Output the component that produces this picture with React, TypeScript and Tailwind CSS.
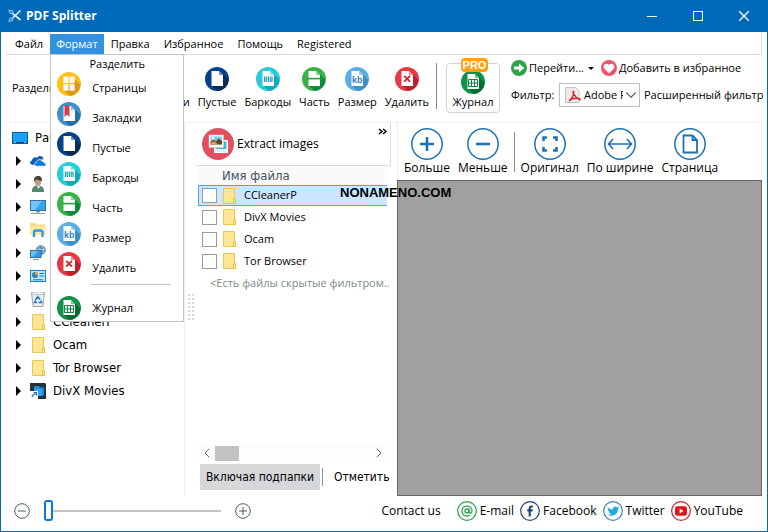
import React, { useState } from "react";
import { ChevronDown, ChevronLeft, ChevronRight } from "lucide-react";

type IconKind =
  | "pages"
  | "bookmarks"
  | "blank"
  | "barcodes"
  | "part"
  | "size"
  | "remove"
  | "log";

const palette: Record<IconKind, [string, string]> = {
  pages: ["#fcbf12", "#d99a10"],
  bookmarks: ["#3f8fc9", "#2470a8"],
  blank: ["#06418a", "#0b2c4e"],
  barcodes: ["#27ccd8", "#12a8b8"],
  part: ["#38b249", "#0c8a3e"],
  size: ["#5aaee4", "#3d8fc6"],
  remove: ["#e63946", "#bf1f2c"],
  log: ["#109347", "#056b32"],
};

const FormatIcon = ({ kind }: { kind: IconKind }) => {
  const [base, shade] = palette[kind];
  return (
    <svg viewBox="0 0 24 24" className="size-6 shrink-0" aria-hidden="true">
      <circle cx="12" cy="12" r="12" fill={base} />
      <path d="M18 7.5L23.4 12.9A12 12 0 0 1 13 23.95L6.5 18.2Z" fill={shade} />
      {kind === "pages" ? (
        <g fill="#fffaf0">
          <rect x="6.3" y="4.6" width="5.2" height="6.6" rx=".6" />
          <rect x="12.5" y="4.6" width="5.2" height="6.6" rx=".6" />
          <rect x="6.3" y="12.2" width="5.2" height="6.6" rx=".6" />
          <rect x="12.5" y="12.2" width="5.2" height="6.6" rx=".6" />
        </g>
      ) : (
        <>
          <path d="M6.5 4H14L18 8V19H6.5Z" fill="#fff" />
          <path d="M14 4V8H18Z" fill={base} opacity=".55" />
        </>
      )}
      {kind === "bookmarks" && (
        <path d="M7.5 3.5H12.5V15L10 12.5L7.5 15Z" fill="#e2364a" />
      )}
      {kind === "barcodes" && (
        <path
          d="M8.5 9.5V15M10.3 9.5V15M12.3 9.5V15M14.2 9.5V15M16 9.5V15"
          stroke="#15a3b4"
          strokeWidth="1.2"
        />
      )}
      {kind === "part" && <path d="M5 10.8H19.5V12.4H5Z" fill="#25a045" />}
      {kind === "size" && (
        <text
          x="12.3"
          y="16"
          textAnchor="middle"
          fontSize="9"
          fontWeight="700"
          fontFamily="Liberation Sans, sans-serif"
          fill="#2d7fb9"
        >
          kb
        </text>
      )}
      {kind === "remove" && (
        <path d="M9.2 8.8L15 14.6M15 8.8L9.2 14.6" stroke="#d5202f" strokeWidth="1.8" />
      )}
      {kind === "log" && (
        <path
          d="M7.5 9.5H16.5V16.5H7.5ZM7.5 13H16.5M10.5 9.5V16.5M13.5 9.5V16.5"
          fill="none"
          stroke="#0f8743"
          strokeWidth="1"
        />
      )}
    </svg>
  );
};

const Folder = () => (
  <svg viewBox="0 0 16 16" className="size-4 shrink-0" aria-hidden="true">
    <path d="M2.5.5H13.5V10.5L14.5 11V15.5H2.5Z" fill="#ffe694" stroke="#ecc64e" />
    <path d="M12.5 15.5V11L14.5 10.5V15.5Z" fill="#ffe694" stroke="#e5b93a" strokeWidth=".8" />
  </svg>
);

const Desktop = () => (
  <svg viewBox="0 0 16 16" className="size-4 shrink-0" aria-hidden="true">
    <rect x=".5" y="2.5" width="15" height="11" fill="#1ba1f5" stroke="#0c5c9c" />
    <path d="M1 12.5H15" stroke="#0a4680" />
    <path d="M2 12.5H4M12 12.5H14" stroke="#7cc8f8" />
  </svg>
);

const Cloud = () => (
  <svg viewBox="0 0 16 16" className="size-4 shrink-0" aria-hidden="true">
    <path
      d="M2.2 11.8C-.6 11.3-.4 7.8 2 7.5C2.2 4.8 5 3.4 7 4.8C9 1.8 13.2 3 13.5 6.2L8 7L5 12Z"
      fill="#0a5db8"
    />
    <path
      d="M6.4 13.2C3.8 13 3.8 9.6 6.4 9.3C6.8 6.2 11.2 5.6 12.2 8.5C14 8.2 14.4 9.4 14.3 9.9C16.6 10.2 16.4 13 14.4 13.2Z"
      fill="#0c7ad8"
      stroke="#fff"
      strokeWidth=".7"
    />
  </svg>
);

const Person = () => (
  <svg viewBox="0 0 16 16" className="size-4 shrink-0" aria-hidden="true">
    <path d="M2 16C1.6 11.5 4 9.6 8 9.6S14.2 12 14 16Z" fill="#4f8a6c" />
    <path d="M6.5 9.5L8.5 13L10.4 9.5Z" fill="#eef3ef" />
    <ellipse cx="8" cy="5.4" rx="3.2" ry="4.3" fill="#c49a7c" />
    <path d="M4 6C3.5 1.5 5.8 0 8.2 0S12.4 2 11.8 5C9.5 5 7.5 4 6.5 3.3Z" fill="#4a3d35" />
  </svg>
);

const Monitor = () => (
  <svg viewBox="0 0 16 16" className="size-4 shrink-0" aria-hidden="true">
    <rect x=".5" y="1.5" width="15" height="10" fill="#36a4ee" stroke="#3a6f9c" />
    <path d="M1 2H12L5 11H1Z" fill="#73c6f9" />
    <path d="M6 12H10V13.5H6Z" fill="#7d96ab" />
    <path d="M1 14.5H15" stroke="#8ba0b3" />
  </svg>
);

const Libraries = () => (
  <svg viewBox="0 0 16 16" className="size-4 shrink-0" aria-hidden="true">
    <path d="M0 1H5L6.5 2.5H15.5V13H0Z" fill="#ffdc76" />
    <path d="M0 4.5H15.5V13H0Z" fill="#ffe7a0" />
    <path d="M4 15V10.5Q4 8.5 6 8.5H10.5Q12.5 8.5 12.5 10.5V15" fill="none" stroke="#2b9be6" strokeWidth="2.4" />
  </svg>
);

const Network = () => (
  <svg viewBox="0 0 16 16" className="size-4 shrink-0" aria-hidden="true">
    <circle cx="10.8" cy="5.2" r="5" fill="#5c8fb8" />
    <path d="M8 1.5Q12 4 9 9M12 1Q15 4 13.5 8.5M6.5 4.5H15" fill="none" stroke="#bcd7ea" strokeWidth=".8" />
    <rect x=".5" y="5.5" width="10.5" height="7" fill="#2d9bea" stroke="#386c98" />
    <path d="M1 6H8L3 12H1Z" fill="#6bc0f6" />
    <path d="M3 14.5H9" stroke="#8297a8" />
  </svg>
);

const ControlPanel = () => (
  <svg viewBox="0 0 16 16" className="size-4 shrink-0" aria-hidden="true">
    <rect x=".5" y="2.5" width="15" height="11" fill="#bfe5fb" stroke="#1583cc" />
    <circle cx="5" cy="7" r="3" fill="#2184cc" />
    <path d="M5 7V4A3 3 0 0 1 8 7Z" fill="#f6a21b" />
    <path d="M9.5 5.5H14M9.5 8H14M3 11.8H13" stroke="#1976b8" />
  </svg>
);

const Bin = () => (
  <svg viewBox="0 0 16 16" className="size-4 shrink-0" aria-hidden="true">
    <path d="M1.5 1.5H14.5L12.8 15.5H3.2Z" fill="#e9eef2" stroke="#98a2aa" />
    <path d="M1.5 1.5L4 3.5H12L14.5 1.5" fill="#fff" stroke="#b4bcc2" />
    <path
      d="M5.3 9L7.8 5.8L10.2 8.6M11 9.5L11.5 11.5H8.5M7 11.5H4.6L5.6 9.5"
      fill="none"
      stroke="#2a79c8"
      strokeWidth="1.6"
    />
  </svg>
);

const Shortcut = () => (
  <svg viewBox="0 0 16 16" className="size-4 shrink-0" aria-hidden="true">
    <path d="M0 0H15L16 1V16H0Z" fill="#2a3038" />
    <path d="M4 3H9L10 4.5H14V12L12 13H4Z" fill="#1c8fdc" />
    <path d="M4 6H12V13H4Z" fill="#30a6f0" />
    <rect x="0" y="8" width="8" height="8" fill="#fff" />
    <path d="M2 14Q2.4 11.4 5.5 11M3.6 9.6H6.4V12.4" fill="none" stroke="#2468b0" strokeWidth="1.2" />
  </svg>
);

const Scissors = () => (
  <svg viewBox="0 0 14 14" className="size-3.5" fill="none" aria-hidden="true">
    <path d="M4 4L12.5 11M4 9.5L12.5 1.5" stroke="#d8efff" strokeWidth="1.7" />
    <path d="M1 1.2L4.6 2L4.8 4.6L2.4 4.4ZM1 12.3L2.2 9.2L4.8 9L4.4 11.6Z" stroke="#8cc8f4" strokeWidth="1.1" />
  </svg>
);

const ImagesIcon = () => (
  <svg viewBox="0 0 32 32" className="size-8 shrink-0" aria-hidden="true">
    <circle cx="16" cy="16" r="16" fill="#e2505f" />
    <path d="M12 12H26V25H12Z" fill="#fff" />
    <path d="M13.5 13.5H24.5V21H13.5Z" fill="#35bdd6" />
    <path d="M13 23H25" stroke="#6fd0e8" strokeDasharray="1 1" />
    <path d="M7 7H21.5V19.5H7Z" fill="#fff" stroke="#f3b8be" strokeWidth=".5" />
    <path d="M8.5 8.5H20V16.5H8.5Z" fill="#6fd0e8" />
    <path d="M8.5 16.5V14L11.5 11.5L14 13.5L16.5 10.5L20 13V16.5Z" fill="#6b3f2c" />
    <path d="M8.5 16.5V15L12 13L16 16.5Z" fill="#e8a13a" />
    <circle cx="11" cy="10.3" r="1.2" fill="#fff" />
  </svg>
);

const zoomPaths: Record<string, React.ReactNode> = {
  in: <path d="M16 9V23M9 16H23" strokeWidth="2.6" />,
  out: <path d="M9 16H23" strokeWidth="2.6" />,
  original: (
    <path
      d="M9.5 13V9.5H13M19 9.5H22.5V13M22.5 19V22.5H19M13 22.5H9.5V19"
      strokeWidth="2.6"
    />
  ),
  width: <path d="M4.5 16H27.5M9 11L4.5 16L9 21M23 11L27.5 16L23 21" strokeWidth="1.6" />,
  page: <path d="M9.5 7.5H18.5L23 12V24.5H9.5ZM18.5 7.5V12H23" strokeWidth="1.8" />,
};

const ZoomIcon = ({ kind }: { kind: string }) => (
  <svg viewBox="0 0 32 32" className="size-8" fill="none" stroke="#1c72b4" aria-hidden="true">
    <circle cx="16" cy="16" r="15.2" strokeWidth="1.5" />
    {zoomPaths[kind]}
  </svg>
);

const PdfIcon = () => (
  <svg viewBox="0 0 16 16" className="size-4" aria-hidden="true">
    <path d="M.5.5H10.5L14 4V15.5H.5Z" fill="#ececec" stroke="#c3c3c3" />
    <path
      d="M4 14C6.5 12.5 9 8.5 8.5 4.5C7.5 4 7.7 9 15 12.8C15.5 11 8.5 10.5 4.5 13"
      fill="none"
      stroke="#d8242c"
      strokeWidth="1.5"
    />
  </svg>
);

const GoIcon = () => (
  <svg viewBox="0 0 16 16" className="size-4" aria-hidden="true">
    <circle cx="8" cy="8" r="8" fill="#2da44a" />
    <path d="M3 6.5H8V3.5L13.2 8L8 12.5V9.5H3Z" fill="#fff" />
  </svg>
);

const HeartIcon = () => (
  <svg viewBox="0 0 16 16" className="size-4" aria-hidden="true">
    <circle cx="8" cy="8" r="8" fill="#f4516b" />
    <path d="M8 13.4L3 8.3C1.2 5.4 5.3 2 8 5C10.7 2 14.8 5.4 13 8.3Z" fill="#fff" />
  </svg>
);

const RoundSign = ({ plus }: { plus?: boolean }) => (
  <svg viewBox="0 0 16 16" className="size-4" fill="none" stroke="#4a5a64" aria-hidden="true">
    <circle cx="8" cy="8" r="7.3" />
    <path d={plus ? "M8 4V12M4 8H12" : "M4 8H12"} />
  </svg>
);

const socialDrawings: Record<string, React.ReactNode> = {
  "E-mail": (
    <g fill="none" stroke="#2c9f4b">
      <circle cx="10" cy="10" r="9.3" strokeWidth="1.2" />
      <circle cx="10" cy="10" r="2" strokeWidth="1.3" />
      <path d="M12.2 7.6V11C12.4 12.8 15 12.4 15 9.8C15 3.6 5 3.4 5 10C5 15.2 10 16 13 14" strokeWidth="1.3" />
    </g>
  ),
  Facebook: (
    <g fill="none" stroke="#1d4674">
      <circle cx="10" cy="10" r="9.3" strokeWidth="1.2" />
      <path d="M12.8 5.6C10.4 5.1 9.7 6 9.7 7.6V15.5M7.3 9.4H12.6" strokeWidth="2.1" />
    </g>
  ),
  Twitter: (
    <>
      <circle cx="10" cy="10" r="9.3" fill="none" stroke="#3a87b4" strokeWidth="1.2" />
      <path
        d="M4.8 6C6.3 7.8 8 8.5 9.7 8.5C9.5 5.6 12.6 4.7 14 6.3L16 5.8L15 7.6C15.5 13.5 9.2 16.3 4.6 13.8C6 13.8 7.2 13.4 8 12.7C6.6 12.4 6 11.6 5.8 10.8L6.6 10.7C5.2 10 4.8 9.2 4.8 8.2L5.6 8.4C4.5 7.6 4.4 6.8 4.8 6Z"
        fill="#25a9e0"
      />
    </>
  ),
  YouTube: (
    <>
      <circle cx="10" cy="10" r="9.3" fill="none" stroke="#c5282b" strokeWidth="1.2" />
      <rect x="4" y="5.2" width="12" height="9.6" rx="2.4" fill="#dd171c" />
      <path d="M8.6 7.6L12.4 10L8.6 12.4Z" fill="#fff" />
    </>
  ),
};

const menuTitles = ["Файл", "Формат", "Правка", "Избранное", "Помощь", "Registered"];

const formats: { kind: IconKind; label: string }[] = [
  { kind: "pages", label: "Страницы" },
  { kind: "bookmarks", label: "Закладки" },
  { kind: "blank", label: "Пустые" },
  { kind: "barcodes", label: "Баркоды" },
  { kind: "part", label: "Часть" },
  { kind: "size", label: "Размер" },
  { kind: "remove", label: "Удалить" },
];

// system nodes carry only an icon
const tree: { id: string; icon: React.ReactNode; label?: string }[] = [
  { id: "cloud", icon: <Cloud /> },
  { id: "user", icon: <Person /> },
  { id: "computer", icon: <Monitor /> },
  { id: "libraries", icon: <Libraries /> },
  { id: "network", icon: <Network /> },
  { id: "control", icon: <ControlPanel /> },
  { id: "bin", icon: <Bin /> },
  { id: "ccleaner", icon: <Folder />, label: "CCleanerP" },
  { id: "ocam", icon: <Folder />, label: "Ocam" },
  { id: "tor", icon: <Folder />, label: "Tor Browser" },
  { id: "divx", icon: <Shortcut />, label: "DivX Movies" },
];

const files = ["CCleanerP", "DivX Movies", "Ocam", "Tor Browser"];

const zoomButtons = [
  { kind: "in", label: "Больше" },
  { kind: "out", label: "Меньше" },
  { kind: "original", label: "Оригинал" },
  { kind: "width", label: "По ширине" },
  { kind: "page", label: "Страница" },
];

const TitleBar = () => (
  <header className="flex h-8 shrink-0 items-center bg-[#0069b9] pl-[7px] text-white">
    <Scissors />
    <h1 className="ml-1 flex-1 text-xs font-bold">PDF Splitter</h1>
    <button type="button" aria-label="Свернуть" className="flex h-8 w-[46px] items-center justify-center">
      <span className="h-px w-2.5 bg-white" />
    </button>
    <button type="button" aria-label="Развернуть" className="flex h-8 w-[46px] items-center justify-center">
      <span className="size-2.5 border border-white" />
    </button>
    <button type="button" aria-label="Закрыть" className="flex h-8 w-[46px] items-center justify-center">
      <svg viewBox="0 0 10 10" className="size-2.5" stroke="#fff" strokeWidth="1.3">
        <path d="M0 0L10 10M10 0L0 10" />
      </svg>
    </button>
  </header>
);

const FormatMenu = () => (
  <div className="absolute top-full left-0 z-20 w-[134px] border border-[#c3c3c3] bg-white pb-px pl-1.5">
    <p className="h-[17px] pr-1.5 text-center leading-[17px]">Разделить</p>
    {formats.map((f) => (
      <button key={f.kind} type="button" className="flex h-[30px] w-full items-center gap-[11px] pt-0.5 text-left">
        <span className="-mt-0.5 self-start">
          <FormatIcon kind={f.kind} />
        </span>
        {f.label}
      </button>
    ))}
    <hr className="mt-0.5 mr-3 mb-[11px] ml-[34px] border-[#c6c6c6]" />
    <button type="button" className="flex w-full items-center gap-[11px] text-left">
      <FormatIcon kind="log" />
      Журнал
    </button>
  </div>
);

const MenuBar = () => (
  <nav className="mr-[5px] ml-[5px] flex h-[23px] shrink-0 items-center border-r border-b border-[#dcdcdc]">
    {menuTitles.map((title) =>
      title === "Формат" ? (
        <div key={title} className="relative">
          <button type="button" className="mt-0.5 block h-5 bg-[#3391e0] px-1.5 text-white">
            {title}
          </button>
          <FormatMenu />
        </div>
      ) : (
        <button key={title} type="button" className="mt-0.5 px-[7px] first:pl-[9px]">
          {title}
        </button>
      )
    )}
  </nav>
);

const Toolbar = () => (
  <div className="mr-[5px] ml-[5px] flex h-[68px] shrink-0 border-b border-[#eeeeee]">
    <div className="flex w-[427px] shrink-0 items-center pl-1.5">
      <span className="flex-1">Разделить</span>
      {formats.map((f) => (
        <button key={f.kind} type="button" className="flex flex-col items-center gap-[3px] px-1">
          <FormatIcon kind={f.kind} />
          <span className="leading-4">{f.label}</span>
        </button>
      ))}
    </div>
    <div className="mt-2 ml-[3px] h-[46px] w-px shrink-0 bg-[#8a8a8a]" />
    <button
      type="button"
      className="relative mt-2 ml-[9px] flex h-[50px] w-[54px] shrink-0 flex-col items-center justify-end rounded border border-[#d3d3d3] pb-0.5"
    >
      <span className="absolute -top-1.5 left-[14px] z-10 h-[14px] w-[27px] rounded-sm bg-[#fba30f] text-center font-['Liberation_Sans',sans-serif] text-[11px] leading-[14px] font-bold text-white">
        PRO
      </span>
      <FormatIcon kind="log" />
      <span className="leading-4">Журнал</span>
    </button>
    <div className="ml-[11px] flex min-w-0 flex-col whitespace-nowrap">
      <div className="mt-[5px] flex h-4 items-center">
        <button type="button" className="flex items-center gap-0.5">
          <GoIcon />
          Перейти...
          <span className="ml-0.5 border-x-[3px] border-t-[3px] border-x-transparent border-t-black" />
        </button>
        <button type="button" className="ml-[7px] flex items-center gap-0.5">
          <HeartIcon />
          Добавить в избранное
        </button>
      </div>
      <div className="mt-[7px] flex h-6 items-center">
        <label htmlFor="filter" className="w-12 shrink-0">
          Фильтр:
        </label>
        <div className="relative flex h-6 w-[81px] shrink-0 items-center">
          <select
            id="filter"
            className="h-6 w-full appearance-none border border-[#bdbdbd] bg-white pr-4 pl-6"
          >
            <option>Adobe PDF</option>
          </select>
          <span className="pointer-events-none absolute left-1.5">
            <PdfIcon />
          </span>
          <ChevronDown
            className="pointer-events-none absolute right-0 size-[18px] text-[#5f6b63]"
            strokeWidth={1.5}
          />
        </div>
        <button type="button" className="ml-1">
          Расширенный фильтр
        </button>
      </div>
    </div>
  </div>
);

const Grip = () => (
  <div className="mt-[170px] h-7 w-[7px] bg-[radial-gradient(#dcdcdc_1px,transparent_1px)] bg-[size:4px_4px]" />
);

const FolderTree = () => (
  <aside className="w-[184px] shrink-0 overflow-hidden border-r border-[#eeeeee] pt-[3px] font-['DejaVu_Sans_Condensed','DejaVu_Sans',sans-serif] text-[13px] whitespace-nowrap">
    <div className="flex h-[23px] items-center gap-[7px] pl-[11px]">
      <Desktop />
      Рабочий стол
    </div>
    <ul>
      {tree.map((node) => (
        <li key={node.id} className="flex h-[23px] items-center gap-[7px] pl-[15px]">
          <span className="mr-0.5 border-y-[5px] border-l-[5px] border-y-transparent border-l-black" />
          {node.icon}
          {node.label}
        </li>
      ))}
    </ul>
  </aside>
);

const FileList = () => {
  const [selected, setSelected] = useState("CCleanerP");
  const [checked, setChecked] = useState<string[]>([]);

  const toggle = (name: string) => {
    setChecked((prev) =>
      prev.includes(name) ? prev.filter((n) => n !== name) : [...prev, name]
    );
  };

  return (
    <section className="flex w-[195px] shrink-0 flex-col">
      <div className="flex h-[43px] shrink-0 border-r border-b border-[#dcdcdc]">
        <button type="button" className="flex flex-1 items-center gap-[3px] pl-1.5 text-xs">
          <ImagesIcon />
          Extract images
        </button>
        <button type="button" aria-label="Ещё" className="mt-1 mr-0.5 size-3 self-start">
          <svg viewBox="0 0 12 12" className="size-3" fill="none" stroke="#000" strokeWidth="1.5">
            <path d="M3 2L6 4.5L3 7M7 2L10 4.5L7 7" />
          </svg>
        </button>
      </div>
      <div className="mr-1 ml-0.5 flex flex-1 flex-col">
        <div className="h-[19px] bg-[#fafafa] pl-6 font-['DejaVu_Sans_Condensed','DejaVu_Sans',sans-serif] text-[13px] leading-[19px] text-[#44545e]">
          Имя файла
        </div>
        <ul>
          {files.map((name) => (
            <li
              key={name}
              onClick={() => setSelected(name)}
              className={
                name === selected
                  ? "flex h-[21px] items-center border-y border-l border-[#54a6f2] bg-[#cce6ff] pl-[3px]"
                  : "flex h-[22px] items-center pl-1"
              }
            >
              <input
                id={name}
                type="checkbox"
                checked={checked.includes(name)}
                onChange={() => toggle(name)}
                className="size-[15px] appearance-none border border-[#9a9a9a] bg-white checked:bg-[#3391e0]"
              />
              <label htmlFor={name} className="flex items-center gap-[7px] pl-1">
                <Folder />
                {name}
              </label>
            </li>
          ))}
        </ul>
        <p className="pl-3 leading-[22px] whitespace-nowrap text-[#7d8c84]">
          &lt;Есть файлы скрытые фильтром..
        </p>
        <div className="mt-auto flex h-4 items-center bg-[#fdfdfd]">
          <button type="button" aria-label="Влево" className="flex w-[17px] justify-center">
            <ChevronLeft className="size-4 text-[#5c6468]" strokeWidth={1.5} />
          </button>
          <span className="h-[15px] w-6 bg-[#c1c3c2]" />
          <button type="button" aria-label="Вправо" className="ml-auto flex w-[17px] justify-center">
            <ChevronRight className="size-4 text-[#5c6468]" strokeWidth={1.5} />
          </button>
        </div>
        <div className="mt-[3px] mb-1.5 ml-0.5 flex h-[26px] items-center font-['DejaVu_Sans_Condensed','DejaVu_Sans',sans-serif] text-xs whitespace-nowrap">
          <button type="button" className="h-[26px] w-[120px] shrink-0 bg-[#d5d7d9]">
            Включая подпапки
          </button>
          <span className="ml-0.5 h-[18px] w-px shrink-0 bg-[#8f8f8f]" />
          <button type="button" className="ml-[11px]">
            Отметить
          </button>
        </div>
      </div>
    </section>
  );
};

const Preview = () => (
  <section className="mr-[5px] ml-1.5 flex min-w-0 flex-1 flex-col">
    <div className="flex h-[57px] shrink-0 items-start border-x border-[#eeeeee] pt-[5px] pl-0.5 text-xs whitespace-nowrap">
      {zoomButtons.map((b) => (
        <React.Fragment key={b.kind}>
          {b.kind === "original" && <span className="mx-0.5 mt-1 h-10 w-px bg-[#8a8a8a]" />}
          <button type="button" className="flex flex-col items-center px-1">
            <ZoomIcon kind={b.kind} />
            <span className="leading-4">{b.label}</span>
          </button>
        </React.Fragment>
      ))}
    </div>
    <div className="flex-1 border border-[#666666] bg-[#a0a0a0]" />
  </section>
);

const Footer = () => {
  const [size, setSize] = useState(0);

  return (
    <footer className="flex h-[35px] shrink-0 items-center justify-between pr-6 pb-[5px] pl-[13px]">
      <div className="flex items-center">
        <button type="button" aria-label="Меньше" onClick={() => setSize(Math.max(0, size - 10))}>
          <RoundSign />
        </button>
        <input
          type="range"
          aria-label="Масштаб"
          value={size}
          onChange={(e) => setSize(Number(e.target.value))}
          className="mx-3.5 h-[21px] w-[177px] appearance-none bg-transparent [&::-webkit-slider-runnable-track]:h-0.5 [&::-webkit-slider-runnable-track]:bg-[#c4c4c4] [&::-webkit-slider-thumb]:-mt-2.5 [&::-webkit-slider-thumb]:h-[21px] [&::-webkit-slider-thumb]:w-[9px] [&::-webkit-slider-thumb]:appearance-none [&::-webkit-slider-thumb]:rounded-[3px] [&::-webkit-slider-thumb]:border-2 [&::-webkit-slider-thumb]:border-[#0a7ad6] [&::-webkit-slider-thumb]:bg-white"
        />
        <button type="button" aria-label="Больше" onClick={() => setSize(Math.min(100, size + 10))}>
          <RoundSign plus />
        </button>
      </div>
      <div className="flex items-center gap-1.5 text-xs">
        <span className="mr-2.5">Contact us</span>
        {Object.entries(socialDrawings).map(([label, drawing]) => (
          <a key={label} href="#" className="flex items-center gap-[3px]">
            <svg viewBox="0 0 20 20" className="size-5" aria-hidden="true">
              {drawing}
            </svg>
            {label}
          </a>
        ))}
      </div>
    </footer>
  );
};

const App: React.FC = () => {
  return (
    <div className="flex min-h-screen flex-col overflow-hidden border-x border-b border-[#0069b9] bg-white font-['Open_Sans',sans-serif] text-[11px] text-black">
      <TitleBar />
      <MenuBar />
      <Toolbar />
      <main className="relative flex flex-1">
        <FolderTree />
        <div className="flex w-[11px] shrink-0 justify-center">
          <Grip />
        </div>
        <FileList />
        <Preview />
        <span className="pointer-events-none absolute top-[60px] left-[339px] font-['Liberation_Sans',sans-serif] text-[13px] leading-5 font-bold">
          NONAMENO.COM
        </span>
      </main>
      <Footer />
    </div>
  );
};

export default App;
